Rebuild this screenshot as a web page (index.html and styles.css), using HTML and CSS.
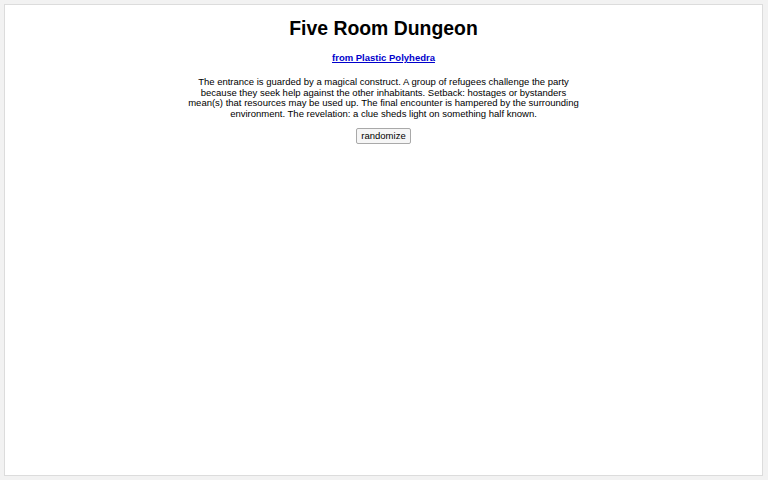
FILE: index.html
```html
<!DOCTYPE html>
<html>
<head>
<meta charset="utf-8">
<link rel="stylesheet" href="styles.css">
</head>
<body>
<div class="box">
  <h1 class="title">Five Room Dungeon</h1>
  <p class="source"><a href="#">from Plastic Polyhedra</a></p>
  <p class="text">The entrance is guarded by a magical construct. A group of refugees challenge the party because they seek help against the other inhabitants. Setback: hostages or bystanders mean(s) that resources may be used up. The final encounter is hampered by the surrounding environment. The revelation: a clue sheds light on something half known.</p>
  <div class="actions"><button class="btn">randomize</button></div>
</div>
</body>
</html>
```
FILE: styles.css
```css
html, body { margin: 0; padding: 0; }
body {
  background: #f2f2f2;
  font-family: "Liberation Sans", Arial, sans-serif;
  padding: 4px 5px 4px 4px;
  color: #000;
}
.box {
  background: #fff;
  border: 1px solid #dcdcdc;
  box-sizing: border-box;
  height: 472px;
  text-align: center;
  padding-top: 12px;
}
.title {
  margin: 0;
  font-size: 19.4px;
  font-weight: bold;
  line-height: 23px;
}
.source {
  margin: 12px 0 0;
  font-size: 9.5px;
  font-weight: bold;
  line-height: 11px;
}
.source a { color: #0000cc; }
.text {
  margin: 14px auto 0;
  width: 400px;
  font-size: 9.5px;
  line-height: 10.7px;
}
.actions { margin-top: 5px; }
.btn {
  font-family: "Liberation Sans", Arial, sans-serif;
  font-size: 9.5px;
  padding: 1px 4px 2px;
  background: #f6f6f6;
  border: 1px solid #a9a9a9;
  border-radius: 2px;
  color: #000;
  line-height: 11px;
}
```
